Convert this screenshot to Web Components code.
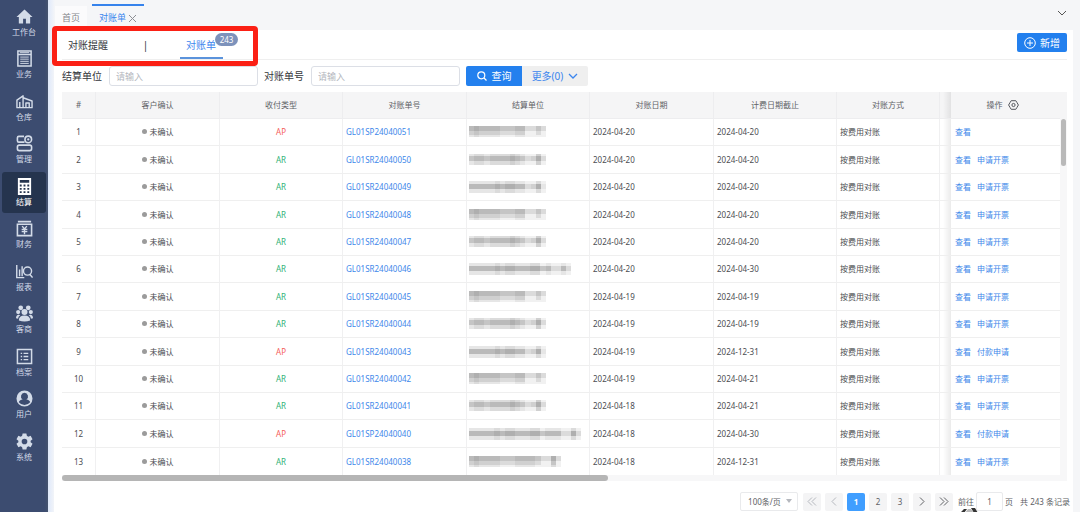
<!DOCTYPE html>
<html lang="zh-CN">
<head>
<meta charset="utf-8">
<title>对账单</title>
<style>
  html { height: 100%; }
  body { margin: 0; min-height: 100%; overflow: hidden; background: #f5f6f8; color: #4b4d52; font: 8px/12px "Noto Sans", "Noto Sans CJK SC", sans-serif; }
</style>
</head>
<body>
<app-shell>
  <side-nav slot="nav">
    <nav-item icon="home">工作台</nav-item>
    <nav-item icon="biz">业务</nav-item>
    <nav-item icon="store">仓库</nav-item>
    <nav-item icon="manage">管理</nav-item>
    <nav-item icon="calc" active>结算</nav-item>
    <nav-item icon="money">财务</nav-item>
    <nav-item icon="report">报表</nav-item>
    <nav-item icon="people">客商</nav-item>
    <nav-item icon="file">档案</nav-item>
    <nav-item icon="user">用户</nav-item>
    <nav-item icon="gear">系统</nav-item>
  </side-nav>
  <page-tabs slot="tabs"></page-tabs>
  <section-tabs></section-tabs>
  <search-bar></search-bar>
  <statement-table></statement-table>
  <page-nav></page-nav>
</app-shell>

<script>
const define = (name, html, setup) => customElements.define(name, class extends HTMLElement {
  constructor() {
    super();
    this.attachShadow({ mode: 'open' }).innerHTML =
      '<style>*{box-sizing:border-box}a{color:inherit;text-decoration:none}button,input,select{font:inherit;color:inherit;margin:0}button{cursor:pointer;border:0;background:none;padding:0}svg{display:block;flex:none}</style>' + html;
  }
  connectedCallback() { if (setup) setup(this, this.shadowRoot); }
});

define('app-shell', `
<style>
  :host { display: flex; min-height: 100vh; }
  .body { flex: 1; min-width: 0; display: flex; flex-direction: column; padding: 0 7px 0 6px; background: linear-gradient(90deg, #dfe9fb, #f5f6f8 7px); }
  main { flex: 1; background: #fff; padding: 0 6px 0 8px; }
</style>
<slot name="nav"></slot>
<div class="body"><slot name="tabs"></slot><main><slot></slot></main></div>`);

define('side-nav', `
<style>
  :host { display: block; flex: none; width: 48px; background: linear-gradient(90deg, #3c4c70 45px, #46546f 48px); }
  nav { display: flex; flex-direction: column; gap: 1px; padding: 2px; }
  ::slotted(:nth-child(even)) { margin-bottom: 1px; }
</style>
<nav><slot></slot></nav>`);

const icons = {
  home: '<path fill="currentColor" d="M9 1.500.5 9.500H3V16.500h4.500V11.500h3v5H15V9.500h2.500z"/>',
  biz: '<path fill="none" stroke="currentColor" stroke-width="1.600" d="M2 1h14v16H2zM2 4.700h14"/><path stroke="currentColor" d="M4.500 7.500h9M4.500 9.700h9M4.500 12h9M4.500 14.200h9M4 2.800h10"/>',
  store: '<path fill="none" stroke="currentColor" stroke-width="1.500" stroke-linejoin="round" d="M1 15.500V7.500L7.500 3v12.500zM7.500 5l9.500 3.500v7H7.500M4 15.500v-6M10.500 15.500v-5h3.500v5"/>',
  manage: '<g fill="none" stroke="currentColor" stroke-width="1.700"><path d="M8.500 1.500H3Q1.500 1.500 1.500 3v3Q1.500 7.500 3 7.500h6"/><circle cx="13" cy="4.700" r="3.500"/><rect x="1.500" y="10.700" width="15" height="5.800" rx="2"/></g><circle cx="13" cy="4.700" r="1.200" fill="currentColor"/>',
  calc: '<path fill="currentColor" fill-rule="evenodd" d="M2 0h14v18H2zM4 2v3h10V2zM4 7v2h2V7zm4 0v2h2V7zm4 0v2h2V7zM4 10.500v2h2v-2zm4 0v2h2v-2zm4 0v2h2v-2zM4 14v2h2v-2zm4 0v2h2v-2zm4 0v2h2v-2z"/>',
  money: '<path fill="none" stroke="currentColor" stroke-width="1.700" d="M1.500 4.500h15v12h-15zM2 1.700h14"/><path fill="none" stroke="currentColor" stroke-width="1.500" d="m6.500 6.500 2.500 3 2.500-3M6 10h6M6 12.300h6M9 9v6"/>',
  report: '<path fill="none" stroke="currentColor" stroke-width="1.500" d="M.8 2v13.500h8M3.800 7v7M6.500 3.500v10.500M17.500 15.500 14.500 12"/><circle cx="12.200" cy="8.500" r="4.300" fill="none" stroke="currentColor" stroke-width="1.500"/>',
  people: '<g fill="currentColor"><circle cx="5" cy="3" r="2.500"/><circle cx="13" cy="3" r="2.500"/><circle cx="2.300" cy="7.500" r="2.200"/><circle cx="15.700" cy="7.500" r="2.200"/><circle cx="9" cy="7.500" r="3.200"/><path d="M3 16.500q0-5.300 6-5.300t6 5.300q-6 2-12 0zM0 14Q0 10.200 3 10.200l1.500.6Q2.200 12 2.200 14.500zM18 14q0-3.800-3-3.800l-1.500.6q2.300 1.200 2.300 3.700z"/></g>',
  file: '<path fill="none" stroke="currentColor" stroke-width="1.600" d="M1.500 1.500h15v15h-15z"/><path stroke="currentColor" stroke-width="1.500" d="M5 5.700h1.500M8 5.700h5M5 9h1.500M8 9h5M5 12.300h1.500M8 12.300h5"/>',
  user: '<path fill="currentColor" fill-rule="evenodd" d="M9 .5a8.500 8.500 0 1 0 0 17 8.500 8.500 0 0 0 0-17zM9 3a3.800 3.800 0 0 1 2 7q3.500.5 4 3-2.500 3-6 3t-6-3q.5-2.500 4-3A3.800 3.800 0 0 1 9 3z"/>',
  gear: '<path fill="currentColor" fill-rule="evenodd" d="M7 .5h4l.5 2.500 1.500.9 2.500-.9 2 3.500-2 1.600v1.800l2 1.600-2 3.500-2.500-.9-1.500.9-.5 2.500H7l-.5-2.500-1.500-.9-2.500.9-2-3.500 2-1.600V8.100l-2-1.600 2-3.500 2.500.9L6.500 3zM9 6a3 3 0 1 0 0 6 3 3 0 0 0 0-6z"/>'
};

define('nav-item', `
<style>
  :host { display: block; }
  a { display: flex; flex-direction: column; align-items: center; gap: 1px; height: 41px; padding-top: 6px; border-radius: 3px; color: #d3dbe8; line-height: 12px; }
  :host([active]) a { background: #25344e; color: #fff; }
</style>
<a href="#"><svg width="17" height="17" viewBox="0 0 18 18"></svg><slot></slot></a>`,
(el, root) => { root.querySelector('svg').innerHTML = icons[el.getAttribute('icon')]; });

define('page-tabs', `
<style>
  :host { display: flex; align-items: flex-end; justify-content: space-between; height: 30px; font-size: 9px; }
  nav { display: flex; gap: 5px; padding-left: 1px; }
  a { display: flex; align-items: center; gap: 2px; height: 26px; padding: 0 7px; color: #85878c; background: #fbfbfc; border-top: 2px solid transparent; background-clip: padding-box; }
  a[aria-current] { color: #3c86ee; border-color: #3683ec; background: none; }
  button { align-self: center; margin: 0 6px 4px 0; }
</style>
<nav><a href="#">首页</a><a href="#" aria-current="page">对账单
<svg width="9" height="9" viewBox="0 0 9 9"><path stroke="#8d9096" d="m1 1 7 7M8 1 1 8"/></svg></a></nav>
<button aria-label="展开"><svg width="10" height="6" viewBox="0 0 10 6"><path fill="none" stroke="#555" d="m1 1 4 4 4-4"/></svg></button>`);

define('section-tabs', `
<style>
  :host { display: flex; justify-content: space-between; align-items: flex-start; height: 29px; border-bottom: 1px solid #efefef; font-size: 10px; }
  nav { position: relative; display: flex; height: 29px; padding-left: 6px; color: #33363b; }
  nav::after { content: ""; position: absolute; z-index: 1; inset: -4px auto -7px -10px; width: 206px; border: 5px solid #fb2015; border-radius: 4px; box-sizing: border-box; pointer-events: none; }
  nav a, nav span { line-height: 30px; }
  .bar { width: 69px; text-align: center; margin-left: 3px; }
  .on { position: relative; width: 43px; padding-left: 6px; border-bottom: 2px solid #5b93dc; color: #3c86ee; }
  .badge { position: absolute; z-index: 2; left: 35px; top: 3px; width: 23px; height: 13px; border-radius: 7px; background: #7d92bb; color: #fff; font-size: 8px; text-align: center; }
  nav .badge { line-height: 13px; }
  button { display: flex; align-items: center; justify-content: center; gap: 4px; margin-top: 3px; width: 50px; height: 19px; border-radius: 2px; background: #2380ee; color: #fff; }
</style>
<nav><a href="#">对账提醒</a><span class="bar">|</span><a href="#" class="on">对账单<span class="badge">243</span></a></nav>
<button><svg width="12" height="12" viewBox="0 0 12 12"><g fill="none" stroke="#fff"><circle cx="6" cy="6" r="5.300"/><path d="M6 3v6M3 6h6"/></g></svg>新增</button>`);

define('search-bar', `
<style>
  :host { display: flex; gap: 6px; padding: 6px 0; font-size: 10px; }
  .actions { display: flex; }
  button { display: flex; align-items: center; justify-content: center; height: 20px; }
  .go { width: 56px; gap: 5px; background: #2380ee; color: #fff; border-radius: 2px 0 0 2px; }
  .more { width: 66px; gap: 5px; background: #efefef; color: #3c86ee; border-radius: 0 2px 2px 0; }
</style>
<text-field label="结算单位"></text-field>
<text-field label="对账单号"></text-field>
<div class="actions">
<button class="go"><svg width="10" height="10" viewBox="0 0 10 10"><g fill="none" stroke="#fff" stroke-width="1.200"><circle cx="4.300" cy="4.300" r="3.500"/><path d="m7 7 2.500 2.500"/></g></svg>查询</button>
<button class="more">更多(0)<svg width="10" height="6" viewBox="0 0 10 6"><path fill="none" stroke="#3c86ee" stroke-width="1.300" d="m1 1 4 4 4-4"/></svg></button>
</div>`);

define('text-field', `
<style>
  :host { display: flex; align-items: center; gap: 7px; color: #33363b; }
  input { width: 149px; height: 20px; padding: 0 6px; border: 1px solid #dcdfe6; border-radius: 3px; font-size: 9px; background: #fff; }
  input::placeholder { color: #b4b7be; }
</style>
<label for="box"></label><input id="box" placeholder="请输入">`,
(el, root) => { root.querySelector('label').textContent = el.getAttribute('label'); });

const rows = [
  ['AP', 'GL01SP24040051', '2024-04-20', '2024-04-20', '', 15, 0],
  ['AR', 'GL01SR24040050', '2024-04-20', '2024-04-20', '申请开票', 15, 1],
  ['AR', 'GL01SR24040049', '2024-04-20', '2024-04-20', '申请开票', 15, 2],
  ['AR', 'GL01SR24040048', '2024-04-20', '2024-04-20', '申请开票', 15, 0],
  ['AR', 'GL01SR24040047', '2024-04-20', '2024-04-20', '申请开票', 15, 1],
  ['AR', 'GL01SR24040046', '2024-04-20', '2024-04-30', '申请开票', 20, 2],
  ['AR', 'GL01SR24040045', '2024-04-19', '2024-04-19', '申请开票', 15, 0],
  ['AR', 'GL01SR24040044', '2024-04-19', '2024-04-19', '申请开票', 15, 1],
  ['AP', 'GL01SR24040043', '2024-04-19', '2024-12-31', '付款申请', 15, 2],
  ['AR', 'GL01SR24040042', '2024-04-19', '2024-04-21', '申请开票', 15, 0],
  ['AR', 'GL01SR24040041', '2024-04-18', '2024-04-21', '申请开票', 15, 1],
  ['AP', 'GL01SP24040040', '2024-04-18', '2024-04-30', '付款申请', 22, 2],
  ['AR', 'GL01SR24040038', '2024-04-18', '2024-12-31', '申请开票', 18, 0]
];

// Masked company name: a mosaic of grey blocks, three bands high.
const tones = ['665676656566656', '656776667665656', '766677676766656'];
const bands = [[[0, 5, 0], [5, 4, -2], [9, 2, -4]], [[0, 2, -3], [2, 5, 0], [7, 4, -3]], [[0, 3, -4], [3, 5, 0], [8, 4, -4]]];
const mosaic = (count, kind) => {
  let out = '';
  for (const [y, h, shift] of bands[kind]) for (let i = 0; i < count; i++) {
    let t = +tones[kind][(i * 4 + kind) % 15] + shift;
    if (i === count - 1 || i === count - 3 || i === count - 4) t -= 3;
    if (t < 1) t = 1;
    const g = 252 - t * 11;
    out += `<rect x="${i * 5}" y="${y}" width="5" height="${h}" fill="rgb(${g},${g},${g})"/>`;
  }
  return `<svg width="${count * 5 + 2}" height="12" viewBox="0 0 ${count * 5} 12" preserveAspectRatio="none" shape-rendering="crispEdges" role="img" aria-label="已隐藏">${out}</svg>`;
};

define('statement-table', `
<style>
  :host { display: block; }
  .frame { display: flex; }
  table { flex: 1; min-width: 0; width: 100%; table-layout: fixed; border-collapse: separate; border-spacing: 0; }
  th { height: 27px; padding: 0; background: #f5f5f6; font-weight: 400; color: #606266; border-right: 1px solid #ededef; border-bottom: 1px solid #ededef; }
  td { height: 27px; padding: 0 3px; border-right: 1px solid #f0f0f1; border-bottom: 1px solid #efefef; white-space: nowrap; overflow: hidden; }
  tr:nth-child(5n+2) td, tr:nth-child(5n+4) td { height: 28px; }
  tbody tr:last-child td { border-bottom: 0; }
  .c { text-align: center; }
  td.mask { padding: 0 2px; }
  .dot { display: inline-block; width: 5px; height: 5px; margin-right: 3px; border-radius: 50%; background: #9b9b9b; vertical-align: 1px; }
  .AP { color: #f5605c; } .AR { color: #2fb277; }
  a { color: #3d87ea; }
  td a + a { margin-left: 6px; }
  th.op, td.op { border-right: 0; padding-left: 4px; }
  th.op { padding: 0 6px 0 0; }
  .op span { display: inline-flex; align-items: center; gap: 5px; }
  th.gap, td.gap { padding: 0; border-right: 0; background-image: linear-gradient(90deg, #0000 3px, #00000014); }
  .rail { width: 7px; background: #f7f7f8; }
  .rail::before { content: ""; display: block; height: 27px; background: #f5f5f6; }
  .thumb { width: 5px; height: 47px; margin-left: 1px; border-radius: 3px; background: #b9b9b9; }
  .hbar { height: 6px; background: #f7f7f8; }
  .hbar div { width: 54.300%; height: 6px; border-radius: 3px; background: #b5b5b5; }
</style>
<div class="frame">
<table>
<colgroup><col style="width:34px"><col style="width:124px"><col style="width:123px"><col style="width:124px"><col style="width:123px"><col style="width:124px"><col style="width:123px"><col style="width:103px"><col style="width:11px"><col style="width:109px"></colgroup>
<thead><tr><th>#</th><th>客户确认</th><th>收付类型</th><th>对账单号</th><th>结算单位</th><th>对账日期</th><th>计费日期截止</th><th>对账方式</th><th class="gap"></th>
<th class="op"><span>操作<svg width="11" height="10" viewBox="0 0 11 10"><g fill="none" stroke="#55585e"><path d="M3.200.7h4.600L9 2.600 10.400 5 9 7.400 7.800 9.300H3.200L2 7.400.6 5 2 2.600z"/><circle cx="5.500" cy="5" r="1.600"/></g></svg></span></th></tr></thead>
<tbody></tbody></table>
<div class="rail"><div class="thumb"></div></div>
</div>
<div class="hbar"><div></div></div>`,
(el, root) => {
  root.querySelector('tbody').innerHTML = rows.map((r, i) => `<tr><td class="c">${i + 1}</td><td class="c"><i class="dot"></i>未确认</td><td class="c ${r[0]}">${r[0]}</td><td><a href="#">${r[1]}</a></td><td class="mask">${mosaic(r[5], r[6])}</td><td>${r[2]}</td><td>${r[3]}</td><td>按费用对账</td><td class="gap"></td><td class="op"><a href="#">查看</a>${r[4] ? `<a href="#">${r[4]}</a>` : ''}</td></tr>`).join('');
});

define('page-nav', `
<style>
  :host { display: flex; justify-content: flex-end; align-items: center; gap: 4px; padding-top: 11px; margin-right: -3px; color: #606266; }
  .size { position: relative; display: flex; margin-right: 1px; }
  select { appearance: none; width: 58px; height: 19px; padding: 0 7px; border: 1px solid #e9eaec; border-radius: 2px; background: #fff; }
  .size svg { position: absolute; right: 6px; top: 7px; pointer-events: none; }
  button { display: flex; align-items: center; justify-content: center; width: 18px; height: 18px; border-radius: 2px; background: #f4f4f5; }
  button[aria-current] { background: #409eff; color: #fff; font-weight: 700; }
  button:disabled { color: #b5b8be; }
  .jump { position: relative; display: flex; align-items: center; gap: 2px; margin: 0 3px 0 1px; }
  input { width: 27px; height: 19px; padding: 0; border: 1px solid #e9eaec; border-radius: 2px; text-align: center; background: #fff; }
  .mark { position: absolute; left: 2px; top: 16px; }
</style>
<div class="size"><select aria-label="每页条数"><option>100条/页</option></select><svg width="6" height="5" viewBox="0 0 6 5"><path fill="#b5b8be" d="M0 0h6L3 4z"/></svg></div>
<button disabled aria-label="首页"><svg width="10" height="9" viewBox="0 0 10 9"><path fill="none" stroke="currentColor" d="M5 .5 1 4.500l4 4M9 .5 5 4.500l4 4"/></svg></button>
<button disabled aria-label="上一页"><svg width="6" height="9" viewBox="0 0 6 9"><path fill="none" stroke="currentColor" d="M5 .5 1 4.500l4 4"/></svg></button>
<button aria-current="page">1</button><button>2</button><button>3</button>
<button aria-label="下一页"><svg width="6" height="9" viewBox="0 0 6 9"><path fill="none" stroke="currentColor" d="m1 .5 4 4-4 4"/></svg></button>
<button aria-label="末页"><svg width="10" height="9" viewBox="0 0 10 9"><path fill="none" stroke="currentColor" d="m1 .5 4 4-4 4M5 .5l4 4-4 4"/></svg></button>
<div class="jump"><label for="page">前往</label><input id="page" value="1"><span>页</span>
<svg class="mark" width="18" height="5" viewBox="0 0 18 5"><path fill="#333" d="m0 5 4-4h3L4 5zM11 0h4l3 5h-4z"/><path fill="#bbb" d="m5 5 3-4h3l3 4z"/></svg></div>
<span>共 243 条记录</span>`);
</script>
</body>
</html>
